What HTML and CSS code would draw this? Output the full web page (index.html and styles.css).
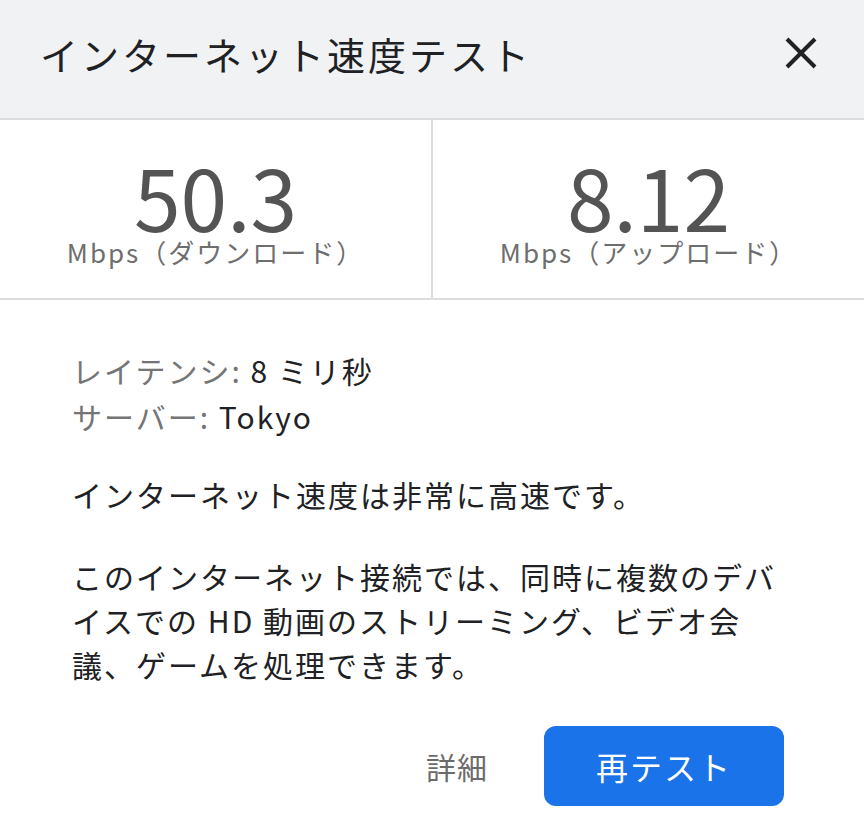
FILE: index.html
```html
<!DOCTYPE html>
<html lang="ja">
<head>
    <meta charset="UTF-8">
    <meta name="viewport" content="width=device-width, initial-scale=1.0">
    <title>インターネット速度テスト</title>
    <link rel="stylesheet" href="styles.css">
</head>
<body>
<div class="dialog">
    <div class="header">
        <h1>インターネット速度テスト</h1>
        <span class="close-btn">
            <svg width="34" height="34" viewBox="0 0 34 34">
                <path d="M3 3 L31 31 M31 3 L3 31" stroke="#202124" stroke-width="4" fill="none"/>
            </svg>
        </span>
    </div>

    <div class="stats">
        <div class="stat">
            <div class="stat-value">50.3</div>
            <div class="stat-unit">Mbps（ダウンロード）</div>
        </div>
        <div class="stat">
            <div class="stat-value">8.12</div>
            <div class="stat-unit">Mbps（アップロード）</div>
        </div>
    </div>

    <div class="content">
        <p class="info">
            <span class="label">レイテンシ:</span> 8 ミリ秒<br>
            <span class="label">サーバー:</span> Tokyo
        </p>
        <p class="summary">インターネット速度は非常に高速です。</p>
        <p class="summary">このインターネット接続では、同時に複数のデバイスでの HD 動画のストリーミング、ビデオ会議、ゲームを処理できます。</p>
    </div>

    <div class="actions">
        <button class="link-btn">詳細</button>
        <button class="primary-btn">再テスト</button>
    </div>
</div>
</body>
</html>
```

FILE: styles.css
```css
body {
    margin: 0;
    background-color: #fff;
    font-family: "Noto Sans CJK JP", "Noto Sans", sans-serif;
    color: #202124;
}

.dialog {
    width: 864px;
    height: 832px;
}

.header {
    display: flex;
    align-items: center;
    justify-content: space-between;
    box-sizing: border-box;
    height: 120px;
    padding: 0 46px 12px 40px;
    background-color: #f1f2f4;
    border-bottom: 2px solid #dadce0;
}

.header h1 {
    margin: 0;
    font-size: 38px;
    font-weight: 400;
    letter-spacing: 3px;
}

.close-btn {
    display: flex;
    cursor: pointer;
}

.stats {
    display: flex;
    height: 178px;
    border-bottom: 2px solid #dadce0;
}

.stat {
    flex: 1;
    display: flex;
    flex-direction: column;
    align-items: center;
    justify-content: center;
    padding-top: 10px;
}

.stat + .stat {
    border-left: 2px solid #dadce0;
}

.stat-value {
    font-size: 84px;
    line-height: 72px;
    color: #545454;
}

.stat-unit {
    margin-top: 4px;
    font-size: 26px;
    line-height: 32px;
    letter-spacing: 2px;
    color: #6e6e6e;
}

.content {
    padding: 47px 80px 0 72px;
}

.content p {
    margin: 0 0 38px;
    font-size: 30px;
    line-height: 44px;
    letter-spacing: 2px;
}

.content p.info {
    margin-bottom: 33px;
    line-height: 46px;
}

.info .label {
    color: #757575;
}

.actions {
    display: flex;
    justify-content: flex-end;
    align-items: center;
    gap: 56px;
    padding: 2px 80px 0 0;
}

.link-btn {
    border: none;
    background: none;
    padding: 0;
    font-family: inherit;
    font-size: 30px;
    letter-spacing: 1px;
    color: #6b6b6b;
    cursor: pointer;
}

.primary-btn {
    width: 240px;
    height: 80px;
    border: none;
    border-radius: 12px;
    background-color: #1a73e8;
    color: #fff;
    font-family: inherit;
    font-size: 32px;
    letter-spacing: 2px;
    cursor: pointer;
}
```
